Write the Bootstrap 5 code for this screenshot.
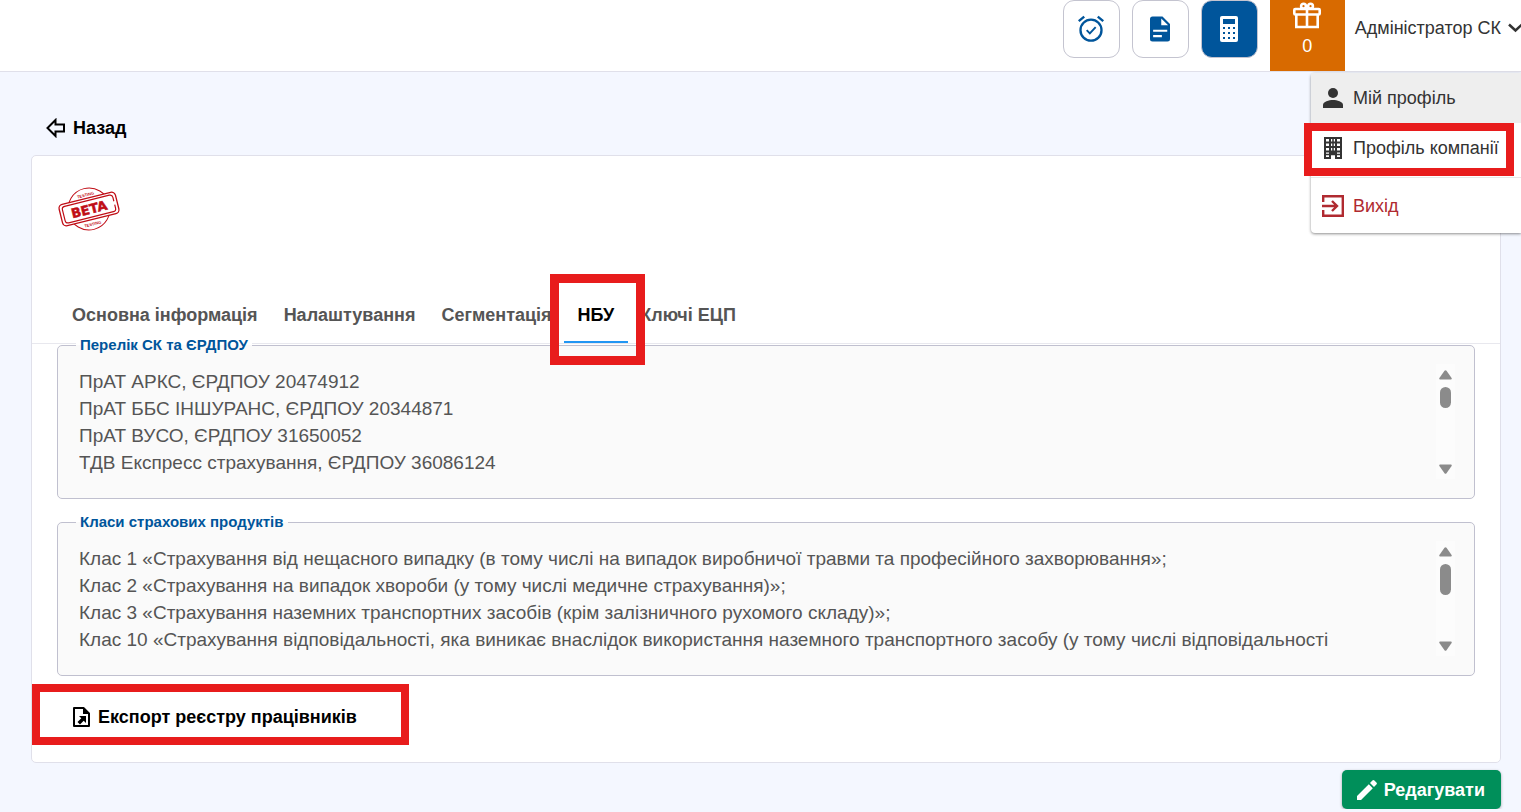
<!DOCTYPE html>
<html lang="uk">
<head>
<meta charset="utf-8">
<meta name="viewport" content="width=device-width, initial-scale=1">
<title>Профіль компанії</title>
<link href="https://cdn.jsdelivr.net/npm/bootstrap@5.3.0/dist/css/bootstrap.min.css" rel="stylesheet">
<style>
  body { background: #f4f7ff; font-family: "Liberation Sans", Arial, sans-serif; color: #333; font-size: 18px; line-height: 24px; }
  svg { display: block; flex: none; }
  .topbar { height: 72px; border-bottom: 1px solid #e0e0ea; background: #fff; }
  .tool-btn { width: 57px; height: 58px; padding: 0; border: 1px solid #c4c4d0; border-radius: 11px; color: #00559b; background: #fff; }
  .tool-btn.is-on { background: #00559b; color: #fff; }
  .bonus { width: 75px; height: 71px; background: #d86a00; color: #fff; border: 0; padding: 0; line-height: 20px; }
  .user-btn { background: none; border: 0; padding: 0; margin-left: 10px; color: #333; height: 56px; gap: 7px; }
  .user-menu { right: 0; top: 73px; width: 210px; z-index: 5; background: #fff; border-radius: 4px 0 0 4px; box-shadow: 0 1px 3px rgba(0,0,0,.45); }
  .user-menu a { height: 50px; padding-left: 10px; color: #333; text-decoration: none; gap: 8px; }
  .user-menu .is-hover { background: #eee; }
  .user-menu .leave { color: #b02a30; border-top: 1px solid #e8e8e8; height: 56px; margin-top: 4px; }
  .marker { position: absolute; border: 8px solid #e81c1c; pointer-events: none; z-index: 6; }
  .marker-menu { inset: 0 7px -3px -7px; }
  .marker-tab { inset: -14px -17px -24px -14px; border-width: 9px; }
  .marker-export { inset: -16px -45px -12px -40px; }
  main { padding: 44px 20px 0 31px; }
  .back-link { color: #000; font-weight: 700; text-decoration: none; gap: 7px; margin: 0 0 15px 15px; }
  .panel { background: #fff; border: 1px solid #e0e0ea; border-radius: 5px; }
  .stamp { padding: 29px 0 0 25px; }
  .tabs { margin-top: 55px; padding-left: 26px; border-bottom: 1px solid #e8e8ee; }
  .tabs a { position: relative; color: #555; font-weight: 700; text-decoration: none; padding: 15px 14px 14px; margin-right: -2px; border-bottom: 2px solid transparent; }
  .tabs a.active { color: #000; border-color: #2196f3; }
  .boxes { margin: -8px 25px 0; }
  .box { border: 1px solid #c0c0cf; border-radius: 5px; background: #fafafa; padding: 0 19px 19px 21px; min-width: 0; margin-bottom: 14px; }
  .box legend { float: none; width: auto; margin: 0 0 10px -3px; padding: 0 4px; font-size: 15px; line-height: 18px; font-weight: 700; color: #00559b; background: linear-gradient(#fff 50%, #fafafa 50%); }
  .box label { display: block; }
  .box textarea { border: 0; padding: 4px 80px 0 0; background: none; resize: none; overflow: hidden; color: #555; font-size: 19px; line-height: 27px; height: 115px; outline: 0; }
  .bar { width: 19px; height: 115px; background: #fcfcfc; padding: 6px 0 5px; color: #8b8b8b; }
  .thumb { width: 11px; border-radius: 6px; background: #8b8b8b; height: 21px; margin-top: 7px; }
  .thumb.tall { height: 31px; }
  .export-btn { background: none; border: 0; padding: 0; color: #000; font-weight: 700; gap: 7px; height: 33px; margin: 24px 0 29px 15px; }
  .edit-btn { background: #008f5a; color: #fff; font-weight: 700; border: 0; border-radius: 5px; height: 39px; padding: 0 16px 0 15px; margin: 7px 0 0 auto; gap: 7px; box-shadow: 0 1px 3px rgba(0,0,0,.35); }
</style>
</head>
<body>
<header class="topbar d-flex justify-content-end position-relative">
  <div class="d-flex me-2 pe-1">
    <button class="tool-btn d-flex align-items-center justify-content-center me-2" type="button" aria-label="Нагадування">
      <svg width="28" height="28" viewBox="0 0 24 24" fill="none" stroke="currentColor" stroke-width="2"><circle cx="12" cy="13" r="9"/><path d="m8.300 13 2.700 2.800 5-5.500" stroke-width="1.600"/><path d="M1.500 5.300 6.200 1.300M22.500 5.300 17.800 1.300"/></svg>
    </button>
    <button class="tool-btn d-flex align-items-center justify-content-center ms-1 me-2" type="button" aria-label="Документи">
      <svg width="30" height="30" viewBox="0 0 24 24" fill="currentColor"><path fill-rule="evenodd" d="M14 2H6a2 2 0 0 0-2 2v16a2 2 0 0 0 2 2h12a2 2 0 0 0 2-2V8zM6.500 16.800V18.500H13.500V16.800zM6.500 12.500V14.200H17.800V12.500zM13 9V3.500L18.500 9z"/></svg>
    </button>
    <button class="tool-btn is-on d-flex align-items-center justify-content-center ms-1" type="button" aria-label="Калькулятор">
      <svg width="18" height="26" viewBox="0 0 18 26"><rect width="18" height="26" rx="2" fill="#fff"/><path fill="#00559b" d="M3 3h12v5H3zM3 11h2v2H3zM8 11h2v2H8zM13 11h2v2h-2zM3 16h2v2H3zM8 16h2v2H8zM13 16h2v2h-2zM3 21h2v2H3zM8 21h2v2H8zM13 21h2v2h-2z"/></svg>
    </button>
  </div>
  <button class="bonus d-flex flex-column align-items-center" type="button">
    <svg width="30" height="32" viewBox="0 0 30 32" fill="none" stroke="#fff" stroke-width="2.600"><rect x="2.300" y="9" width="25.400" height="5.500" rx="1"/><path d="M4.300 15v12h21.400V15M15 9v18"/><circle cx="11.500" cy="6.200" r="2.400"/><circle cx="18.500" cy="6.200" r="2.400"/></svg>
    <span class="mt-1">0</span>
  </button>
  <button class="user-btn d-flex align-items-center" type="button" aria-expanded="true">Адміністратор СК
    <svg width="13" height="10" viewBox="0 0 13 10" fill="none" stroke="#333" stroke-width="2.500"><path d="m1 1.500 6.500 6L14 1.500"/></svg>
  </button>
  <nav class="user-menu position-absolute" aria-label="Меню користувача">
    <a class="is-hover d-flex align-items-center" href="#"><svg width="24" height="24" viewBox="0 0 24 24" fill="currentColor"><circle cx="12" cy="7" r="5"/><path d="M2 22v-3c0-3.300 6-5 10-5s10 1.700 10 5v3z"/></svg>Мій профіль</a>
    <a class="d-flex align-items-center position-relative" href="#"><svg width="24" height="24" viewBox="0 0 24 24"><path fill="currentColor" fill-rule="evenodd" d="M3 1h18v22h-7v-4h-4v4H3zM5 3v2.500h3V3zm5 0v2.500h4V3zm6 0v2.500h3V3zM5 7.500V10h3V7.500zm5 0V10h4V7.500zm6 0V10h3V7.500zM5 12v2.500h3V12zm5 0v2.500h4V12zm6 0v2.500h3V12zM5 16.500V21h3v-4.500zm11 0V21h3v-4.500z"/><path stroke="currentColor" stroke-width="1.500" d="M12 2v16M4 18.500h16"/></svg>Профіль компанії<span class="marker marker-menu"></span></a>
    <a class="leave d-flex align-items-center" href="#"><svg width="24" height="24" viewBox="0 0 24 24" fill="none" stroke="currentColor" stroke-width="2.400"><path d="M2.200 8V2.200h19.600v19.600H2.200V16M1 12h14M11 7l5 5-5 5"/></svg>Вихід</a>
  </nav>
</header>
<main>
  <a href="#" class="back-link d-flex align-items-center"><svg width="20" height="20" viewBox="0 0 20 20" fill="none" stroke="#000" stroke-width="2"><path d="M9.500 2 1.500 10l8 8v-4.500H18v-7H9.500z"/></svg>Назад</a>
  <section class="panel">
    <div class="stamp">
      <svg width="64" height="48" viewBox="0 0 64 48" fill="none" stroke="#c00d16" role="img" aria-label="Beta testing">
        <g transform="rotate(-14 32 24)">
          <circle cx="32" cy="24" r="21"/>
          <g fill="#c00d16" stroke="none" font-family="Liberation Sans" font-weight="700" font-size="4" text-anchor="middle"><text x="32" y="11">TESTING</text><text x="32" y="41">TESTING</text></g>
          <rect x="3" y="13" width="58" height="22" rx="4" stroke-width="1.300" fill="#fff"/>
          <path d="M9 15.500h46q3 0 3 3v4M58 26v3.500q0 3-3 3H9q-3 0-3-3v-11q0-3 3-3" stroke-width="1.200"/>
          <text x="32" y="29" text-anchor="middle" font-family="DejaVu Sans" font-weight="700" font-size="13" fill="#c00d16" stroke-width="0.500">BETA</text>
        </g>
      </svg>
    </div>
    <nav class="tabs d-flex" aria-label="Розділи профілю">
      <a href="#">Основна інформація</a>
      <a href="#">Налаштування</a>
      <a href="#">Сегментація</a>
      <a href="#" class="active z-1" aria-current="page">НБУ<span class="marker marker-tab"></span></a>
      <a href="#">Ключі ЕЦП</a>
    </nav>
    <form class="boxes">
      <fieldset class="box"><legend><label for="companies">Перелік СК та ЄРДПОУ</label></legend>
        <div class="d-flex"><textarea id="companies" class="flex-grow-1" readonly>ПрАТ АРКС, ЄРДПОУ 20474912
ПрАТ ББС ІНШУРАНС, ЄРДПОУ 20344871
ПрАТ ВУСО, ЄРДПОУ 31650052
ТДВ Експресс страхування, ЄРДПОУ 36086124</textarea>
          <div class="bar d-flex flex-column align-items-center" aria-hidden="true">
            <svg width="13" height="10" viewBox="0 0 13 10" fill="currentColor"><path d="M5.500.8Q6.500-.3 7.500.8L12.600 8Q13.200 9.600 11.800 9.600H1.200Q-.2 9.600.4 8z"/></svg>
            <div class="thumb"></div>
            <svg class="mt-auto" width="13" height="10" viewBox="0 0 13 10" fill="currentColor"><path d="M5.500 9.200Q6.500 10.300 7.500 9.200L12.600 2Q13.200.4 11.800.4H1.200Q-.2.4.4 2z"/></svg>
          </div>
        </div>
      </fieldset>
      <fieldset class="box"><legend><label for="classes">Класи страхових продуктів</label></legend>
        <div class="d-flex"><textarea id="classes" class="flex-grow-1" readonly>Клас 1 «Страхування від нещасного випадку (в тому числі на випадок виробничої травми та професійного захворювання»;
Клас 2 «Страхування на випадок хвороби (у тому числі медичне страхування)»;
Клас 3 «Страхування наземних транспортних засобів (крім залізничного рухомого складу)»;
Клас 10 «Страхування відповідальності, яка виникає внаслідок використання наземного транспортного засобу (у тому числі відповідальності</textarea>
          <div class="bar d-flex flex-column align-items-center" aria-hidden="true">
            <svg width="13" height="10" viewBox="0 0 13 10" fill="currentColor"><path d="M5.500.8Q6.500-.3 7.500.8L12.600 8Q13.200 9.600 11.800 9.600H1.200Q-.2 9.600.4 8z"/></svg>
            <div class="thumb tall"></div>
            <svg class="mt-auto" width="13" height="10" viewBox="0 0 13 10" fill="currentColor"><path d="M5.500 9.200Q6.500 10.300 7.500 9.200L12.600 2Q13.200.4 11.800.4H1.200Q-.2.4.4 2z"/></svg>
          </div>
        </div>
      </fieldset>
      <button type="button" class="export-btn d-flex align-items-center position-relative">
        <svg width="19" height="22" viewBox="0 0 19 22" fill="none" stroke="#000" stroke-width="2"><path d="M2 2h9.500L17 7.500V20H2z" stroke-linejoin="round"/><path d="M11 1v7h7z" fill="#000" stroke="none"/><path d="M7 10h7v7l-2.300-2.300L8 18.500 5.500 16l3.800-3.700z" fill="#000" stroke="none"/></svg>
        Експорт реєстру працівників<span class="marker marker-export"></span>
      </button>
    </form>
  </section>
  <button type="button" class="edit-btn d-flex align-items-center">
    <svg width="20" height="20" viewBox="0 0 20 20" fill="#fff"><path d="M0 16 11.800 4.200 15.800 8.200 4 20H0zM13 3l2.400-2.400q1-1 2 0l2 2q1 1 0 2L17 7z"/></svg>Редагувати
  </button>
</main>
<script src="https://cdn.jsdelivr.net/npm/bootstrap@5.3.0/dist/js/bootstrap.bundle.min.js"></script>
</body>
</html>
